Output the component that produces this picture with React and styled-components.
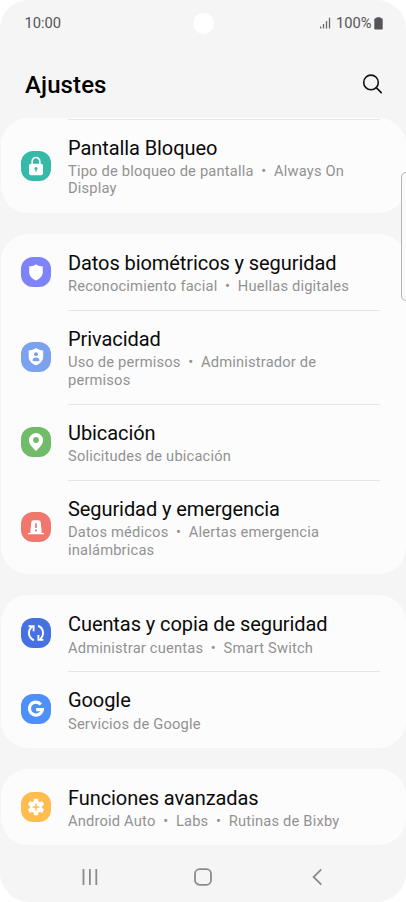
import React from "react";
import styled, { createGlobalStyle } from "styled-components";

const GlobalStyle = createGlobalStyle`
  * { box-sizing: border-box; }
  body { margin: 0; background: #fff; font-family: Roboto, sans-serif; }
`;

const Screen = styled.div`
  position: relative;
  width: 406px;
  height: 902px;
  padding-top: 1px;
  border-radius: 29px;
  background: #f5f5f5;
  overflow: hidden;
`;

const StatusBar = styled.header`
  display: grid;
  grid-template-columns: 1fr 21px 1fr;
  align-items: center;
  height: 44px;
  padding: 0 23.5px 0 24.5px;
  color: #545454;
  font-size: 14.7px;
`;

const Clock = styled.span`
  letter-spacing: 0;
`;

const Camera = styled.span`
  width: 21px;
  height: 21px;
  border-radius: 50%;
  background: #fff;
`;

const StatusIcons = styled.div`
  display: flex;
  justify-content: flex-end;
  align-items: center;
  svg { display: block; }
`;

const Percent = styled.span`
  margin: 0 2px 0 5px;
`;

const TitleBar = styled.div`
  display: flex;
  align-items: center;
  justify-content: space-between;
  height: 73.2px;
  padding: 5px 22.5px 0 25px;
  svg { display: block; }
`;

const Title = styled.h1`
  margin: 2px 0 0;
  font-size: 24px;
  font-weight: 500;
  line-height: 30px;
  letter-spacing: 0.1px;
  color: #000;
`;

const List = styled.main`
  display: flex;
  flex-direction: column;
  gap: 21.15px;
  padding: 0 0.5px;
`;

const Card = styled.section`
  padding-top: ${(p) => (p.$continued ? 0.4 : 0)}px;
  border-radius: 27px;
  background: #fcfcfc;
`;

const Row = styled.div`
  display: flex;
  align-items: center;
  height: ${(p) => (p.$tall ? 94.1 : 76.1)}px;
  padding-left: 20.5px;
`;

const Tile = styled.span`
  flex: none;
  width: 30px;
  height: 30px;
  margin-right: 17px;
  border-radius: 12px;
  background: ${(p) => p.$color};
  svg { display: block; }
`;

const Texts = styled.div`
  align-self: stretch;
  width: 312px;
  padding-top: 17px;
  border-top: 1px solid ${(p) => (p.$divided ? "#e5e5e5" : "transparent")};
`;

const Name = styled.div`
  font-size: 20px;
  line-height: 23px;
  letter-spacing: -0.08px;
  color: #0a0a0a;
  white-space: nowrap;
`;

const Detail = styled.div`
  margin-top: 3.2px;
  padding-right: 5px;
  font-size: 14.7px;
  line-height: 17.6px;
  letter-spacing: 0.18px;
  color: #929292;
`;

const NavBar = styled.nav`
  display: flex;
  justify-content: space-between;
  align-items: center;
  height: 64px;
  padding: 0 78.5px 0 79px;
  svg { display: block; }
`;

const EdgeHandle = styled.span`
  position: absolute;
  top: 172px;
  right: -6px;
  width: 11px;
  height: 129px;
  border: 1px solid #b5b5b5;
  border-radius: 5px;
  background: #fafafa;
`;

const shield = "M15 7.2c2 1.4 4.300 2.200 6.800 2.300v5.600c0 3.900-2.700 6.700-6.800 8.300-4.100-1.600-6.800-4.400-6.800-8.300V9.500c2.500-.1 4.800-.9 6.800-2.300z";

const glyphs = {
  lock: (c) => (
    <>
      <rect x="8" y="12.800" width="14" height="11.400" rx="2" fill="#fff" />
      <path d="M11.200 14v-3.700a3.800 3.800 0 0 1 7.600 0V14" fill="none" stroke="#fff" strokeWidth="1.600" />
      <circle cx="15" cy="17.500" r="1.500" fill={c} />
      <path d="M15 17.500v3.200" stroke={c} strokeWidth="1.200" />
    </>
  ),
  shield: () => <path d={shield} fill="#fff" />,
  privacy: (c) => (
    <>
      <path d={shield} transform="translate(-1.100 -1.700) scale(1.070)" fill="#fff" />
      <circle cx="15" cy="12.300" r="2" fill={c} />
      <path d="M11.500 18.700c0-2.100 1.200-3.300 3.500-3.300s3.500 1.200 3.500 3.300q-3.500 1-7 0z" fill={c} />
    </>
  ),
  pin: (c) => (
    <>
      <path d="M15 6.100a7.100 7.100 0 0 1 7.100 7.100c0 4-3.900 7.600-7.100 10.900-3.200-3.300-7.100-6.900-7.100-10.900A7.100 7.100 0 0 1 15 6.100z" fill="#fff" />
      <circle cx="15" cy="13" r="2.900" fill={c} />
    </>
  ),
  siren: (c) => (
    <>
      <path d="M9.200 21 10.300 10.200Q10.600 8.200 12.600 8.200h4.800q2 0 2.300 2L20.800 21H23v1.300H7V21z" fill="#fff" />
      <path d="M15 11.200v4.900M15 17.400v2.100" stroke={c} strokeWidth="1.700" />
    </>
  ),
  sync: () => (
    <g fill="none" stroke="#fff" strokeWidth="2">
      <path d="M12.900 22.200C6.900 19.800 6.500 12.300 11 8.800" />
      <path d="M7.600 8.300h5v5" strokeWidth="1.900" />
      <path d="M17.100 7.800c6 2.400 6.400 9.900 1.900 13.400" />
      <path d="M22.400 21.900h-5v-5" strokeWidth="1.900" />
    </g>
  ),
  google: () => (
    <path d="M19.900 10.400A6.500 6.500 0 1 0 21.300 15.700H15.200" fill="none" stroke="#fff" strokeWidth="3.200" />
  ),
  gear: (c) => (
    <>
      <g fill="#fff">
        <circle cx="15" cy="15" r="6.200" />
        {[0, 60, 120].map((a) => (
          <rect key={a} x="12.800" y="6.700" width="4.400" height="16.600" rx=".7" transform={`rotate(${a} 15 15)`} />
        ))}
      </g>
      <path d="M15 11.600v6.800M11.600 15h6.800" stroke={c} strokeWidth="1.500" />
    </>
  ),
};

const groups = [
  [{ icon: "lock", color: "#35baa7", name: "Pantalla Bloqueo", details: ["Tipo de bloqueo de pantalla", "Always On Display"], tall: true, divided: true }],
  [
    { icon: "shield", color: "#7d84fa", name: "Datos biométricos y seguridad", details: ["Reconocimiento facial", "Huellas digitales"] },
    { icon: "privacy", color: "#7ba2ef", name: "Privacidad", details: ["Uso de permisos", "Administrador de permisos"], tall: true, divided: true },
    { icon: "pin", color: "#70bc68", name: "Ubicación", details: ["Solicitudes de ubicación"], divided: true },
    { icon: "siren", color: "#f0776b", name: "Seguridad y emergencia", details: ["Datos médicos", "Alertas emergencia inalámbricas"], tall: true, divided: true },
  ],
  [
    { icon: "sync", color: "#4671e3", name: "Cuentas y copia de seguridad", details: ["Administrar cuentas", "Smart Switch"] },
    { icon: "google", color: "#4d8ffb", name: "Google", details: ["Servicios de Google"], divided: true },
  ],
  [{ icon: "gear", color: "#ffbd50", name: "Funciones avanzadas", details: ["Android Auto", "Labs", "Rutinas de Bixby"] }],
];

function SettingRow({ item }) {
  return (
    <Row $tall={item.tall}>
      <Tile $color={item.color}>
        <svg width="30" height="30" viewBox="0 0 30 30">{glyphs[item.icon](item.color)}</svg>
      </Tile>
      <Texts $divided={item.divided}>
        <Name>{item.name}</Name>
        <Detail>{item.details.join("\u00a0 • \u00a0")}</Detail>
      </Texts>
    </Row>
  );
}

export default function App() {
  return (
    <>
      <GlobalStyle />
      <Screen>
        <StatusBar>
          <Clock>10:00</Clock>
          <Camera />
          <StatusIcons>
            <svg width="12" height="12" viewBox="0 0 12 12" stroke="#6a6a6a" strokeWidth="1.300">
              <path d="M1.600 11.500V9.500M4.500 11.500V7M7.500 11.500V4M10.500 11.500V.8" />
            </svg>
            <Percent>100%</Percent>
            <svg width="9" height="13" viewBox="0 0 9 13" fill="#545454">
              <path d="M2.500 1.300V.3h4v1H7.500q1.200 0 1.200 1.200v8.900q0 1.200-1.200 1.200H1.500Q.3 12.600.3 11.400V2.500q0-1.200 1.200-1.200z" />
            </svg>
          </StatusIcons>
        </StatusBar>
        <TitleBar>
          <Title>Ajustes</Title>
          <svg width="24" height="24" viewBox="0 0 24 24" fill="none" stroke="#111" strokeWidth="1.600" strokeLinecap="round">
            <circle cx="11" cy="10.400" r="7.300" />
            <path d="m16.200 15.600 5 5" />
          </svg>
        </TitleBar>
        <List>
          {groups.map((items, i) => (
            <Card key={i} $continued={i === 0}>
              {items.map((item) => <SettingRow key={item.name} item={item} />)}
            </Card>
          ))}
        </List>
        <NavBar>
          <svg width="22" height="22" viewBox="0 0 22 22" stroke="#8b8b8b" strokeWidth="1.800">
            <path d="M4.500 3v16M10.900 3v16M17.300 3v16" />
          </svg>
          <svg width="22" height="22" viewBox="0 0 22 22" fill="none" stroke="#8b8b8b" strokeWidth="1.800">
            <rect x="3" y="3.200" width="16" height="15.600" rx="4.600" />
          </svg>
          <svg width="22" height="22" viewBox="0 0 22 22" fill="none" stroke="#8b8b8b" strokeWidth="1.800">
            <path d="M15.300 3.300 7.600 11l7.700 7.700" />
          </svg>
        </NavBar>
        <EdgeHandle />
      </Screen>
    </>
  );
}
